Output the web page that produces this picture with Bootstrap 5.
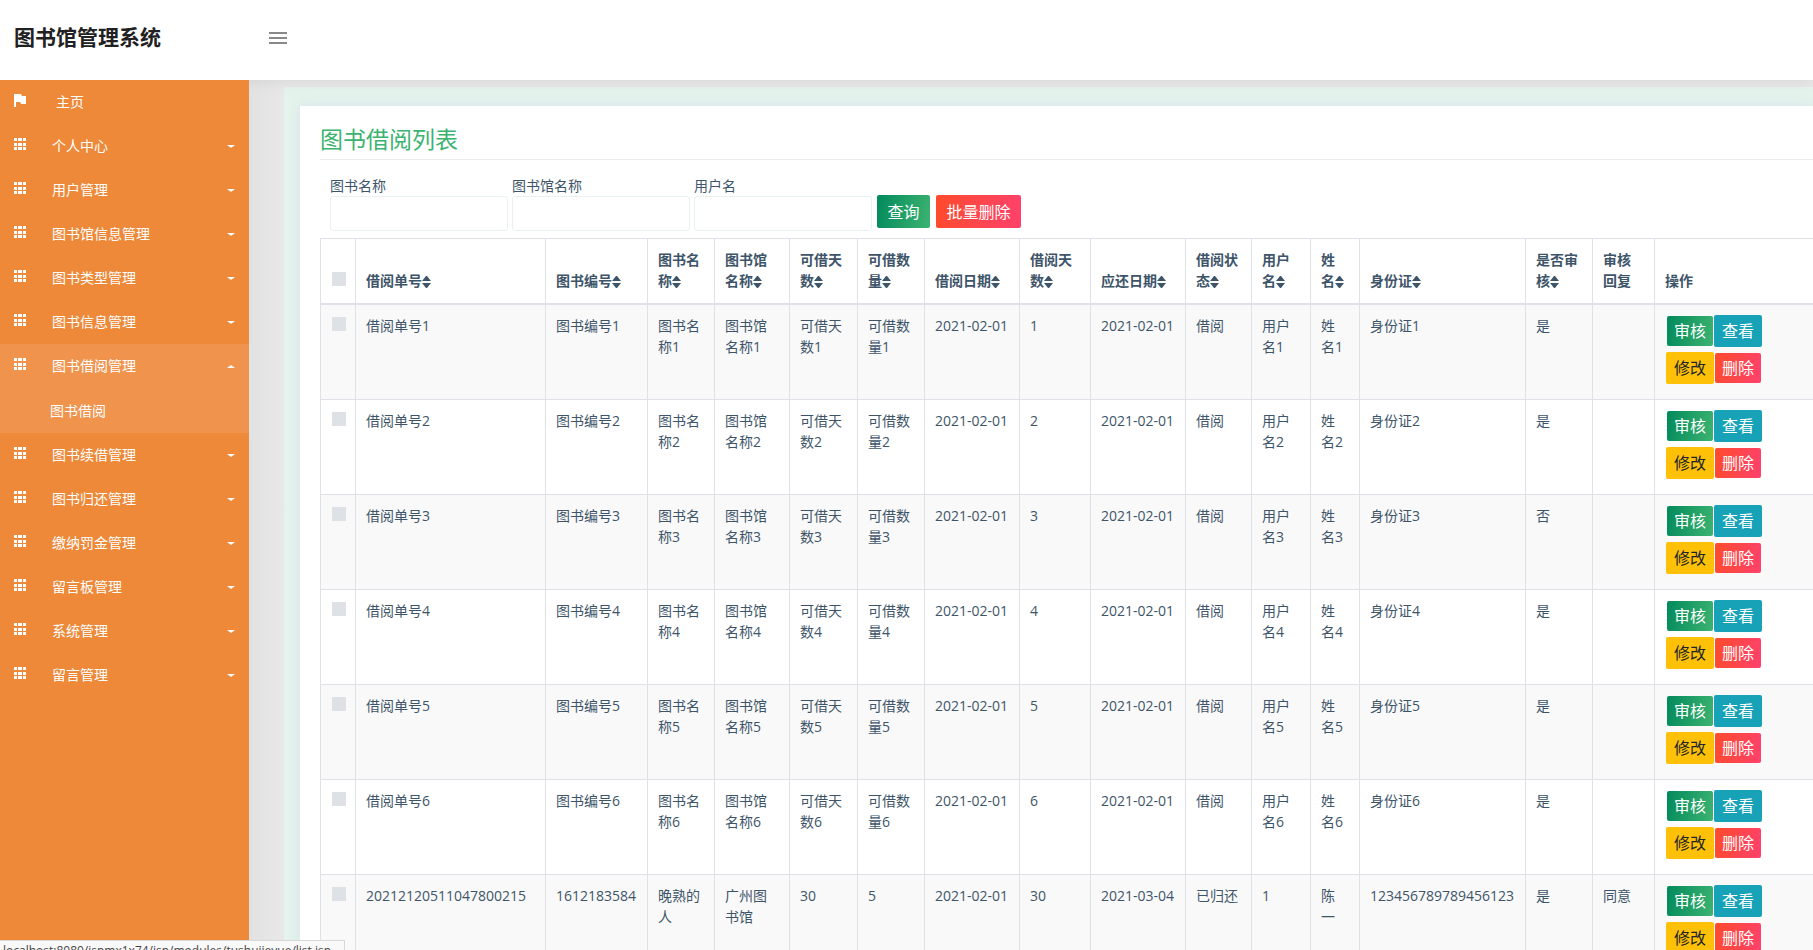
<!DOCTYPE html>
<html lang="zh-CN">
<head>
<meta charset="utf-8">
<meta name="viewport" content="width=device-width, initial-scale=1">
<title>图书馆管理系统</title>
<link href="https://cdn.jsdelivr.net/npm/bootstrap@5.3.0/dist/css/bootstrap.min.css" rel="stylesheet">
<style>
body{font-family:"Open Sans","Noto Sans CJK SC",sans-serif;font-size:14px;line-height:21px;color:#3e5569;background:#e8e8e8}
.topbar{height:80px;background:#fff;box-shadow:0 2px 14px rgba(0,0,0,.07);z-index:2}
.brand-area{width:249px;padding-left:14px;padding-bottom:6px}
.brand-title{font-size:21px;line-height:30px;font-weight:700;color:#212121;text-decoration:none}
.menu-toggle{padding:0 0 5px 20px;line-height:0;color:#888}
.side{width:249px;background:#ed8939;z-index:3}
.side a{height:44px;padding:0 14px;color:#fff;text-decoration:none}
.side .label-text{margin-left:26px;margin-bottom:2px}
.side .home-text{margin-left:30px}
.side a svg{margin-bottom:4px}
.side .caret{width:0;height:0;border:4px solid transparent;border-top:3px solid #fff;border-bottom:0}
.side .caret.up{border-top:0;border-bottom:3px solid #fff}
.side .opened{background:#f0944d}
.side .opened .sub-link{height:45px;padding-left:50px}
.stage{background:linear-gradient(90deg,#e2e2e2,#e8e8e8 35px);padding:7px 0 0 35px;overflow:hidden}
.mint{background:#e4f3ec;padding:19px 0 0 16px;min-width:0}
.panel{background:#fff;box-shadow:0 0 10px rgba(210,220,235,.7);padding:20px 0 40px 20px;min-height:100%}
.panel h1{font-size:23px;line-height:26px;font-weight:400;color:#3cb371;border-bottom:1px solid #ececec;margin:0 0 15px;height:34px}
.query{padding-left:10px;gap:4px}
.query label{display:block}
.query input{width:178px;height:35px;border:1px solid #e9f1f0;border-radius:3px;background:#fff;display:block}
.btn{--bs-btn-border-radius:2px;--bs-btn-font-size:16px;line-height:24px;border:0;white-space:nowrap}
.grad-green{background:linear-gradient(100deg,#028a5c,#3cb371);color:#fff}
.grad-red{background:linear-gradient(100deg,#ff4b2b,#ff416c);color:#fff}
.query .btn{height:33px;width:53px;padding:2px 0;margin:0 1px 3px}
.query .grad-red{width:85px}
.data{table-layout:fixed;width:calc(100% + 20px);margin:7px 0 0;color:inherit;border-color:#dee2e6}
.data>:not(caption)>*>*{padding:10px 12px 10px 10px;border:1px solid #dee2e6}
.data>:not(caption)>*>:first-child{padding-left:11px;padding-right:8px}
.data thead th{vertical-align:bottom;border-bottom-width:2px;padding-bottom:12px}
.data tbody tr{height:95px}
.data tbody td{color:#3e5569;background:#fff;box-shadow:none}
.data tbody tr:nth-child(odd) td{background:#f9f9f9}
.data .one-line{white-space:nowrap}
.data input{appearance:none;display:block;width:14px;height:14px;margin:0 0 5px;background:#dee2e6}
.data tbody input{margin-top:2px}
.ops{display:grid;grid-template-columns:48px 48px;row-gap:5px;margin-left:1px}
.ops .btn{height:32px;padding:0;line-height:30px}
.ops .btn:nth-child(1),.ops .btn:nth-child(4){height:30px;width:46px;margin:1px;line-height:28px}
.info-b{background:#17a2b8;color:#fff}.warn-b{background:#ffc107;color:#212529}
.url-tip{position:fixed;left:0;bottom:-12px;width:345px;height:22px;background:#f9f9f9;border:1px solid #d8d8d8;border-left:0;color:#444;padding-left:3px;z-index:9;font:12px/20px "Open Sans",sans-serif;white-space:nowrap}
</style>
<script src="https://cdn.jsdelivr.net/npm/bootstrap@5.3.0/dist/js/bootstrap.bundle.min.js"></script>
</head>
<body class="vh-100 overflow-hidden d-flex flex-column">
<header class="topbar d-flex align-items-center position-relative flex-shrink-0">
<div class="brand-area"><a class="brand-title" href="#">图书馆管理系统</a></div>
<button class="menu-toggle border-0 bg-transparent" aria-label="菜单"><svg width="18" height="12" fill="currentColor"><path d="M0 0h18v2H0zM0 5h18v2H0zM0 10h18v2H0z"/></svg></button>
</header>
<svg class="d-none"><symbol id="apps" viewBox="0 0 12 12"><path fill="#fff" d="M0 0h3v3H0zM4 0h4v3H4zM9 0h3v3H9zM0 5h3v3H0zM4 5h4v3H4zM9 5h3v3H9zM0 9h3v3H0zM4 9h4v3H4zM9 9h3v3H9z"/></symbol></svg>
<div class="d-flex flex-grow-1 overflow-hidden">
<nav class="side flex-shrink-0 position-relative" id="menu"></nav>
<main class="stage flex-grow-1 d-flex">
<div class="mint flex-grow-1">
<section class="panel">
<h1>图书借阅列表</h1>
<form class="query d-flex align-items-end" onsubmit="return false">
<div><label for="q1">图书名称</label><input id="q1" type="text"></div>
<div><label for="q2">图书馆名称</label><input id="q2" type="text"></div>
<div><label for="q3">用户名</label><input id="q3" type="text"></div>
<button class="btn grad-green">查询</button>
<button class="btn grad-red" type="button">批量删除</button>
</form>
<table class="table data">
<colgroup id="cols"></colgroup>
<thead><tr id="head"></tr></thead>
<tbody id="rows"></tbody>
</table>
</section>
</div>
</main>
</div>
<div class="url-tip">localhost:8080/jspmx1x74/jsp/modules/tushujieyue/list.jsp</div>
<script>
const apps='<svg width="12" height="12"><use href="#apps"/></svg>';
const item=(t,up)=>`<a href="#" class="d-flex align-items-center">${apps}<span class="label-text flex-grow-1">${t}</span><span class="caret ${up?'up':''}"></span></a>`;
menu.innerHTML='<a href="#" class="d-flex align-items-center"><svg width="12" height="13"><path fill="#fff" d="M0 0h7l1 2h4v8H7L6 8H2v5H0z"/></svg><span class="label-text home-text">主页</span></a>'+
['个人中心','用户管理','图书馆信息管理','图书类型管理','图书信息管理'].map(t=>item(t)).join('')+
'<div class="opened">'+item('图书借阅管理',1)+'<a href="#" class="sub-link d-flex align-items-center">图书借阅</a></div>'+
['图书续借管理','图书归还管理','缴纳罚金管理','留言板管理','系统管理','留言管理'].map(t=>item(t)).join('');
const widths=[35,190,102,67,75,68,67,95,71,95,66,59,49,166,67,62];
cols.innerHTML=widths.map(w=>`<col style="width:${w}px">`).join('')+'<col>';
const sort='<svg width="9" height="12" viewBox="0 0 9 12" fill="currentColor"><path d="M4 0h1l4 5H0zM0 7h9l-4 5H4z"/></svg>';
head.innerHTML='<th><input type="checkbox" aria-label="全选"></th>'+['借阅单号','图书编号','图书名称','图书馆名称','可借天数','可借数量','借阅日期','借阅天数','应还日期','借阅状态','用户名','姓名','身份证','是否审核'].map(t=>`<th>${t}${sort}</th>`).join('')+'<th>审核回复</th><th>操作</th>';
const data=[1,2,3,4,5,6].map(n=>['借阅单号'+n,'图书编号'+n,'图书名称'+n,'图书馆名称'+n,'可借天数'+n,'可借数量'+n,'2021-02-01',n,'2021-02-01','借阅','用户名'+n,'姓名'+n,'身份证'+n,n===3?'否':'是','']);
data.push(['20212120511047800215','1612183584','晚熟的人','广州图书馆','30','5','2021-02-01','30','2021-03-04','已归还','1','陈一','123456789789456123','是','同意']);
const ops='<div class="ops"><button class="btn grad-green">审核</button><button class="btn info-b">查看</button><button class="btn warn-b">修改</button><button class="btn grad-red">删除</button></div>';
rows.innerHTML=data.map(r=>'<tr><td><input type="checkbox" aria-label="选择"></td>'+r.map(c=>`<td${/^[\d-]+$/.test(c)?' class="one-line"':''}>${c}</td>`).join('')+`<td>${ops}</td></tr>`).join('');
</script>
</body>
</html>
